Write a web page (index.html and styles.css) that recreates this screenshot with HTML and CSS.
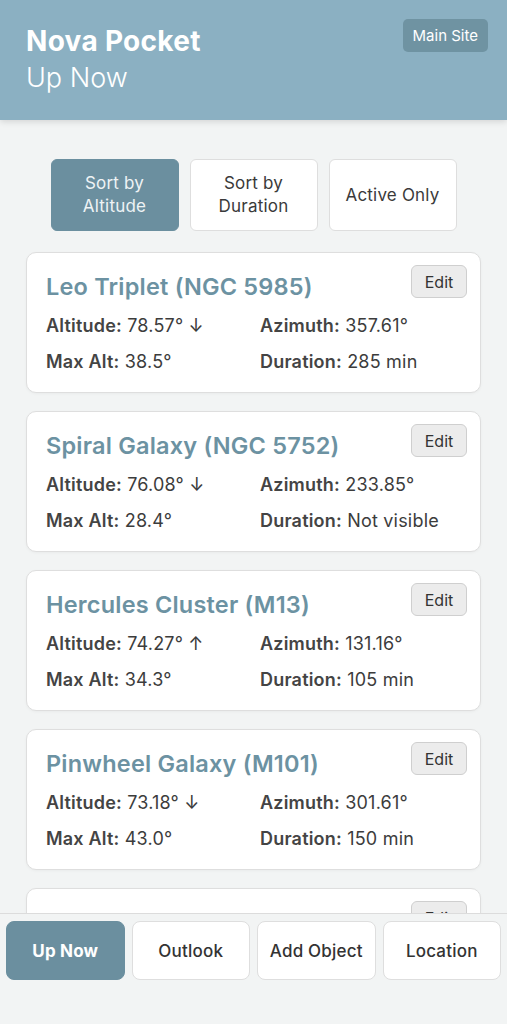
FILE: index.html
```html
<!DOCTYPE html>
<html lang="en">
<head>
    <meta charset="UTF-8">
    <meta name="viewport" content="width=device-width, initial-scale=1.0">
    <title>Nova Pocket - Up Now</title>
    <link rel="stylesheet" href="styles.css">
</head>
<body>
    <header class="top-bar">
        <div class="titles">
            <h1>Nova Pocket</h1>
            <div class="subtitle">Up Now</div>
        </div>
        <a href="#" class="main-site">Main Site</a>
    </header>

    <main class="content">
        <section class="sort-bar">
            <button class="sort-btn active">Sort by<br>Altitude</button>
            <button class="sort-btn">Sort by<br>Duration</button>
            <button class="sort-btn">Active Only</button>
        </section>

        <section class="object-list">
            <article class="object-card">
                <div class="card-head">
                    <h2>Leo Triplet (NGC 5985)</h2>
                    <button class="edit-btn">Edit</button>
                </div>
                <div class="stats">
                    <div><b>Altitude:</b> 78.57° ↓</div>
                    <div><b>Azimuth:</b> 357.61°</div>
                    <div><b>Max Alt:</b> 38.5°</div>
                    <div><b>Duration:</b> 285 min</div>
                </div>
            </article>
            <article class="object-card">
                <div class="card-head">
                    <h2>Spiral Galaxy (NGC 5752)</h2>
                    <button class="edit-btn">Edit</button>
                </div>
                <div class="stats">
                    <div><b>Altitude:</b> 76.08° ↓</div>
                    <div><b>Azimuth:</b> 233.85°</div>
                    <div><b>Max Alt:</b> 28.4°</div>
                    <div><b>Duration:</b> Not visible</div>
                </div>
            </article>
            <article class="object-card">
                <div class="card-head">
                    <h2>Hercules Cluster (M13)</h2>
                    <button class="edit-btn">Edit</button>
                </div>
                <div class="stats">
                    <div><b>Altitude:</b> 74.27° ↑</div>
                    <div><b>Azimuth:</b> 131.16°</div>
                    <div><b>Max Alt:</b> 34.3°</div>
                    <div><b>Duration:</b> 105 min</div>
                </div>
            </article>
            <article class="object-card">
                <div class="card-head">
                    <h2>Pinwheel Galaxy (M101)</h2>
                    <button class="edit-btn">Edit</button>
                </div>
                <div class="stats">
                    <div><b>Altitude:</b> 73.18° ↓</div>
                    <div><b>Azimuth:</b> 301.61°</div>
                    <div><b>Max Alt:</b> 43.0°</div>
                    <div><b>Duration:</b> 150 min</div>
                </div>
            </article>
            <article class="object-card">
                <div class="card-head">
                    <h2>Whirlpool Galaxy (M51)</h2>
                    <button class="edit-btn">Edit</button>
                </div>
                <div class="stats">
                    <div><b>Altitude:</b> 70.02° ↓</div>
                    <div><b>Azimuth:</b> 310.44°</div>
                    <div><b>Max Alt:</b> 41.2°</div>
                    <div><b>Duration:</b> 130 min</div>
                </div>
            </article>
        </section>
    </main>

    <nav class="bottom-nav">
        <a href="#" class="nav-btn active">Up Now</a>
        <a href="#" class="nav-btn">Outlook</a>
        <a href="#" class="nav-btn">Add Object</a>
        <a href="#" class="nav-btn">Location</a>
    </nav>
</body>
</html>
```

FILE: styles.css
```css
body {
    font-family: Inter, "Open Sans", sans-serif;
    margin: 0;
    background-color: #f2f4f4;
    color: #3c3c3c;
}
.top-bar {
    height: 120px;
    box-sizing: border-box;
    background-color: #8bb0c2;
    color: white;
    padding: 19px 19px 0 26px;
    display: flex;
    justify-content: space-between;
    align-items: flex-start;
    box-shadow: 0 2px 6px rgba(0,0,0,0.12);
}
.top-bar h1 {
    margin: 6px 0 0;
    font-size: 28px;
    line-height: 32px;
    font-weight: 700;
    letter-spacing: 0.3px;
}
.subtitle {
    margin-top: 4px;
    font-size: 27px;
    line-height: 34px;
    font-weight: 300;
}
.main-site {
    background-color: #6f93a2;
    color: white;
    text-decoration: none;
    font-size: 15px;
    height: 33px;
    line-height: 33px;
    padding: 0 10px;
    border-radius: 5px;
}
.content {
    padding: 39px 26px 130px;
}
.sort-bar {
    display: flex;
    justify-content: center;
    gap: 11px;
    margin-bottom: 21px;
}
.sort-btn {
    width: 128px;
    height: 72px;
    background-color: white;
    border: 1px solid #dedede;
    border-radius: 6px;
    font-family: inherit;
    font-size: 17px;
    line-height: 23px;
    letter-spacing: 0.2px;
    color: #3a3a3a;
}
.sort-btn.active {
    background-color: #6b8f9f;
    border-color: #6b8f9f;
    color: #eef3f5;
}
.object-list {
    display: flex;
    flex-direction: column;
    gap: 18px;
}
.object-card {
    background-color: white;
    border: 1px solid #dedede;
    border-radius: 10px;
    padding: 12px 13px 18px 19px;
    box-shadow: 0 1px 3px rgba(0,0,0,0.04);
}
.card-head {
    display: flex;
    justify-content: space-between;
    align-items: flex-start;
}
.card-head h2 {
    margin: 8px 0 0;
    font-size: 23.5px;
    line-height: 28px;
    font-weight: 600;
    letter-spacing: 0.2px;
    color: #6c92a2;
}
.edit-btn {
    height: 33px;
    width: 56px;
    background-color: #ececec;
    border: 1px solid #cfcfcf;
    border-radius: 6px;
    font-family: inherit;
    font-size: 16px;
    color: #333;
}
.stats {
    display: grid;
    grid-template-columns: 214px 1fr;
    row-gap: 12px;
    margin-top: 13px;
    font-size: 18px;
    line-height: 24px;
    letter-spacing: 0.2px;
}
.stats b {
    font-weight: 600;
    color: #444;
}
.bottom-nav {
    position: fixed;
    left: 0;
    right: 0;
    bottom: 0;
    height: 111px;
    box-sizing: border-box;
    background-color: #f2f4f4;
    border-top: 1px solid #dcdcdc;
    padding: 7px 6px 0;
    display: flex;
    gap: 7px;
    align-items: flex-start;
}
.nav-btn {
    flex: 1;
    height: 59px;
    display: flex;
    align-items: center;
    justify-content: center;
    background-color: white;
    border: 1px solid #dedede;
    border-radius: 8px;
    box-sizing: border-box;
    text-decoration: none;
    font-size: 17px;
    font-weight: 500;
    letter-spacing: 0.2px;
    color: #333;
}
.nav-btn.active {
    background-color: #6b8f9f;
    border-color: #6b8f9f;
    color: white;
    font-weight: 700;
}
```
